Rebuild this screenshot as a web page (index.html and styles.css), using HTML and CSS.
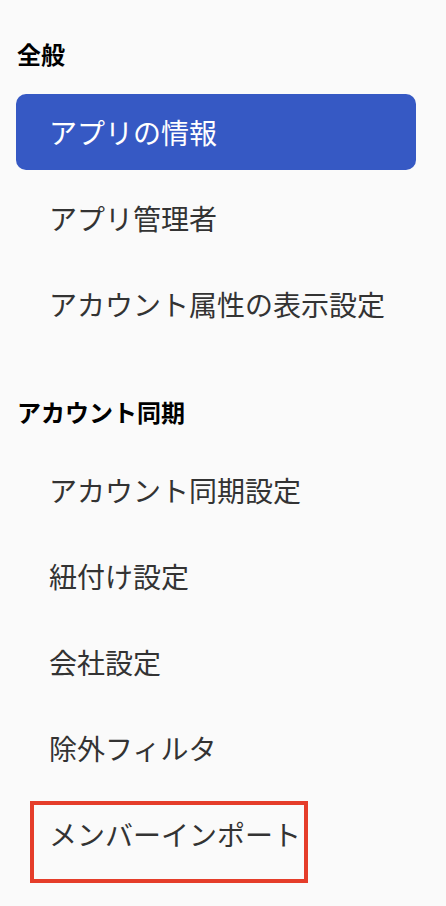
FILE: index.html
```html
<!DOCTYPE html>
<html lang="ja">
<head>
<meta charset="utf-8">
<link rel="stylesheet" href="styles.css">
</head>
<body>
<nav class="sidebar">
  <section class="group">
    <h2 class="group-title">全般</h2>
    <ul class="menu">
      <li class="item active">アプリの情報</li>
      <li class="item">アプリ管理者</li>
      <li class="item">アカウント属性の表示設定</li>
    </ul>
  </section>
  <section class="group">
    <h2 class="group-title">アカウント同期</h2>
    <ul class="menu">
      <li class="item">アカウント同期設定</li>
      <li class="item">紐付け設定</li>
      <li class="item">会社設定</li>
      <li class="item">除外フィルタ</li>
      <li class="item highlighted">メンバーインポート<span class="mark"></span></li>
    </ul>
  </section>
</nav>
</body>
</html>
```

FILE: styles.css
```css
html, body {
  margin: 0;
  padding: 0;
  background: #fafafa;
}
body {
  font-family: "Noto Sans CJK JP", "Noto Sans", sans-serif;
  width: 446px;
  height: 906px;
  overflow: hidden;
}
.sidebar {
  padding: 36px 30px 0 16px;
  display: flex;
  flex-direction: column;
  gap: 52px;
}
.group {
  display: flex;
  flex-direction: column;
  gap: 22px;
}
.group-title {
  margin: 0;
  padding-left: 1px;
  font-size: 24px;
  line-height: 36px;
  font-weight: 700;
  color: #000;
}
.menu {
  list-style: none;
  margin: 0;
  padding: 0;
  display: flex;
  flex-direction: column;
  gap: 10px;
}
.item {
  position: relative;
  height: 76px;
  display: flex;
  align-items: center;
  padding-left: 33px;
  font-size: 28px;
  color: #333;
  border-radius: 10px;
}
.item.active {
  background: #3659c4;
  color: #fff;
}
.mark {
  position: absolute;
  left: 14px;
  top: 5px;
  width: 270px;
  height: 74px;
  border: 4px solid #e53d2a;
}
```
